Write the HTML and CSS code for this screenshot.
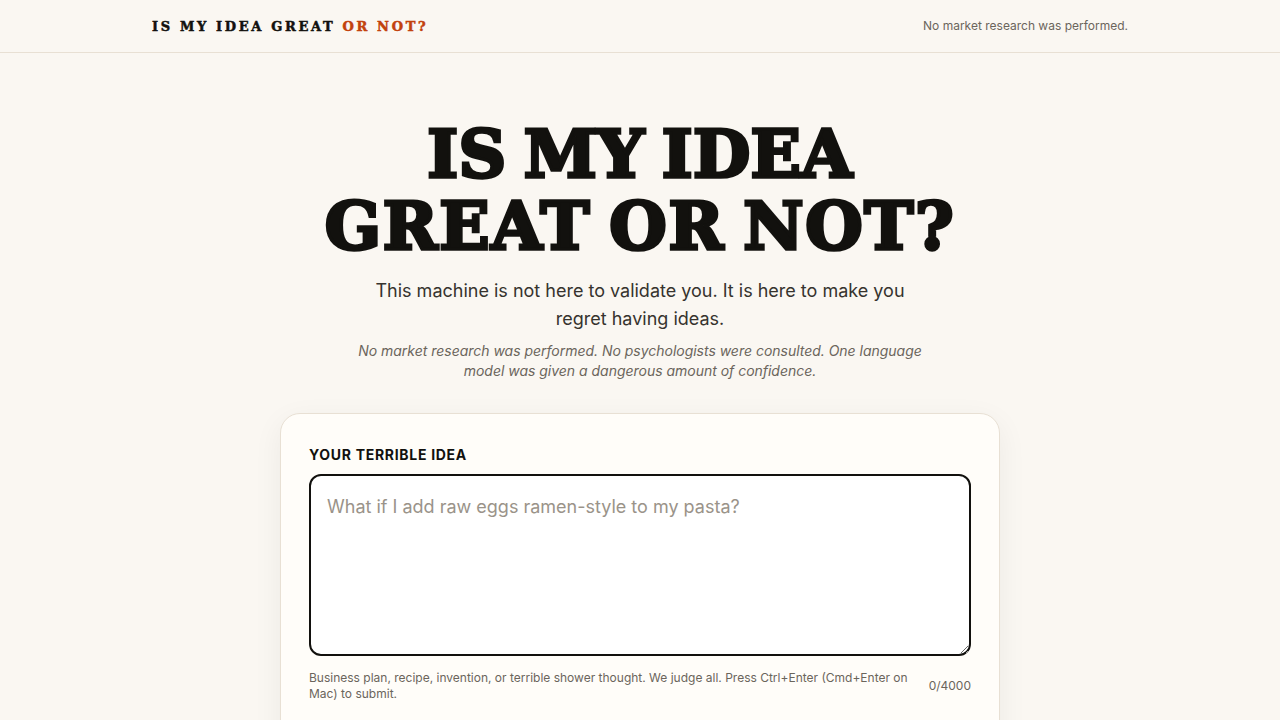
FILE: index.html
```html
<!DOCTYPE html>
<html lang="en">
<head>
<meta charset="utf-8">
<title>Is My Idea Great or Not?</title>
<link rel="stylesheet" href="styles.css">
</head>
<body>
<header class="topbar">
  <div class="topbar-inner">
    <div class="brand">IS MY IDEA GREAT <span class="brand-accent">OR NOT?</span></div>
    <div class="topbar-note">No market research was performed.</div>
  </div>
</header>
<main class="main">
  <section class="hero">
    <h1 class="title"><span class="title-line-a">IS MY IDEA</span><br><span class="title-line-b">GREAT OR NOT?</span></h1>
    <p class="lead">This machine is not here to validate you. It is here to make you regret having ideas.</p>
    <p class="disclaimer">No market research was performed. No psychologists were consulted. One language model was given a dangerous amount of confidence.</p>
  </section>
  <form class="card">
    <label class="field-label" for="idea">YOUR TERRIBLE IDEA</label>
    <textarea class="field" id="idea" placeholder="What if I add raw eggs ramen-style to my pasta?"></textarea>
    <div class="field-meta">
      <span class="hint">Business plan, recipe, invention, or terrible shower thought. We judge all. Press Ctrl+Enter (Cmd+Enter on Mac) to submit.</span>
      <span class="count">0/4000</span>
    </div>
  </form>
</main>
</body>
</html>
```
FILE: styles.css
```css
* { box-sizing: border-box; }
html, body { margin: 0; padding: 0; }
body {
  background: #faf7f2;
  color: #12110e;
  font-family: Inter, "Liberation Sans", sans-serif;
}
.topbar { height: 53px; border-bottom: 1px solid #e8e0d4; }
.topbar-inner {
  max-width: 976px;
  height: 52px;
  margin: 0 auto;
  display: flex;
  align-items: center;
  justify-content: space-between;
}
.brand {
  font-family: "DejaVu Serif", serif;
  font-weight: 700;
  font-size: 13px;
  letter-spacing: 2.65px;
  color: #12110e;
  -webkit-text-stroke: 0.5px currentColor;
}
.brand-accent { color: #c2410c; }
.topbar-note { font-size: 12px; line-height: 15px; padding-bottom: 1px; color: #6b655c; }
.main { max-width: 720px; margin: 0 auto; padding-bottom: 80px; }
.hero { padding-top: 65px; display: flex; flex-direction: column; align-items: center; text-align: center; }
.title {
  margin: 0;
  font-family: "DejaVu Serif", serif;
  font-weight: 700;
  font-size: 66px;
  line-height: 72px;
  color: #12110e;
  -webkit-text-stroke: 3.5px currentColor;
  word-spacing: -6px;
  white-space: nowrap;
}
.title-line-a { letter-spacing: 0.3px; }
.title-line-b { letter-spacing: 1.55px; }
.lead { margin: 15px 0 0; max-width: 560px; font-size: 18px; line-height: 28px; color: #36332e; }
.disclaimer { margin: 8px 0 0; max-width: 580px; font-size: 14px; line-height: 20px; font-style: italic; letter-spacing: -0.02px; color: #6b655c; }
.card {
  margin-top: 32px;
  padding: 32px 28px 120px;
  background: #fffdf9;
  border: 1px solid #e8e0d4;
  border-radius: 20px;
  box-shadow: 0 8px 30px rgba(18, 17, 14, 0.06);
  display: flex;
  flex-direction: column;
}
.field-label { font-size: 14px; line-height: 17px; font-weight: 700; letter-spacing: 0.7px; color: #12110e; }
.field {
  display: block;
  margin-top: 11px;
  width: 100%;
  height: 182px;
  padding: 17px 16px 16px;
  background: #fff;
  border: 2px solid #12110e;
  border-radius: 12px;
  font-family: inherit;
  font-size: 18px;
  line-height: 27px;
  color: #12110e;
  outline: none;
  resize: vertical;
}
.field::placeholder { color: #9a9389; opacity: 1; }
.field-meta { margin-top: 14px; display: flex; align-items: center; justify-content: space-between; gap: 20px; }
.hint { font-size: 12px; line-height: 16px; color: #6b655c; }
.count { font-size: 12px; line-height: 15px; padding-bottom: 1px; color: #6b655c; white-space: nowrap; }
```
